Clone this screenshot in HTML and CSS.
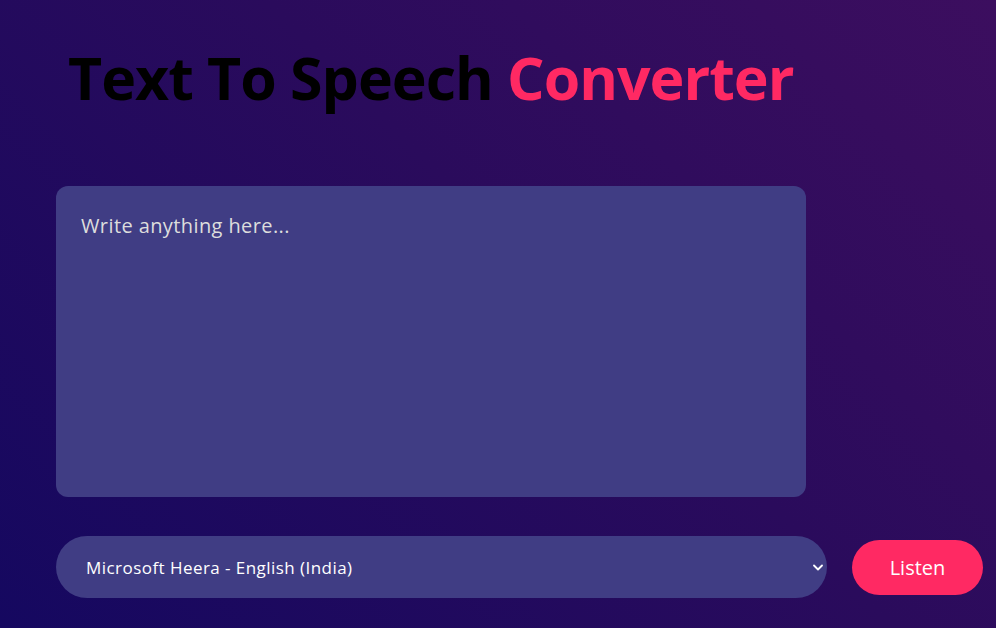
FILE: index.html
```html
<!DOCTYPE html>
<html lang="en">
<head>
<meta charset="utf-8">
<title>Text To Speech Converter</title>
<link rel="stylesheet" href="styles.css">
</head>
<body>
<main class="hero">
  <h1 class="title">Text To Speech <span class="accent">Converter</span></h1>
  <textarea class="input" placeholder="Write anything here..."></textarea>
  <div class="row">
    <div class="select-wrap">
      <select class="voice">
        <option>Microsoft Heera - English (India)</option>
      </select>
      <svg class="chevron" width="10" height="7" viewBox="0 0 10 7" aria-hidden="true"><path d="M1 1.5 L5 5.5 L9 1.5" fill="none" stroke="#fff" stroke-width="1.8" stroke-linecap="round" stroke-linejoin="round"/></svg>
    </div>
    <button class="listen">Listen</button>
  </div>
</main>
</body>
</html>
```

FILE: styles.css
```css
* { box-sizing: border-box; }
html, body { margin: 0; padding: 0; }
body {
  width: 996px;
  height: 628px;
  overflow: hidden;
  background: linear-gradient(45deg, #150860 0%, #2a0b5c 55%, #3c0e5f 100%);
  font-family: "Open Sans", "Liberation Sans", sans-serif;
}
.hero {
  padding: 0 0 0 56px;
  display: flex;
  flex-direction: column;
  align-items: flex-start;
}
.title {
  margin: 41px 0 0 12px;
  font-size: 59px;
  line-height: 72px;
  font-weight: 700;
  color: #000;
  letter-spacing: -1px;
}
.accent { color: #ff2963; }
.input {
  margin-top: 73px;
  width: 750px;
  height: 311px;
  background: #403d84;
  color: #fff;
  border: 0;
  outline: 0;
  border-radius: 12px;
  padding: 26px 25px;
  resize: none;
  font-family: inherit;
  font-size: 20px;
  letter-spacing: 0.4px;
}
.input::placeholder { color: #ddd; font-size: 20px; }
.row {
  margin-top: 39px;
  display: flex;
  align-items: center;
  gap: 25px;
}
.select-wrap {
  position: relative;
  width: 771px;
  height: 62px;
}
.voice {
  width: 100%;
  height: 100%;
  appearance: none;
  -webkit-appearance: none;
  background: #403d84;
  color: #fff;
  border: 0;
  outline: 0;
  border-radius: 31px;
  padding: 0 30px;
  font-family: inherit;
  font-size: 17px;
  letter-spacing: 0.45px;
}
.chevron {
  position: absolute;
  right: 4px;
  top: 28px;
}
.listen {
  width: 131px;
  height: 55px;
  background: #ff2963;
  color: #fff;
  border: 0;
  border-radius: 28px;
  font-family: inherit;
  font-size: 20px;
}
```
